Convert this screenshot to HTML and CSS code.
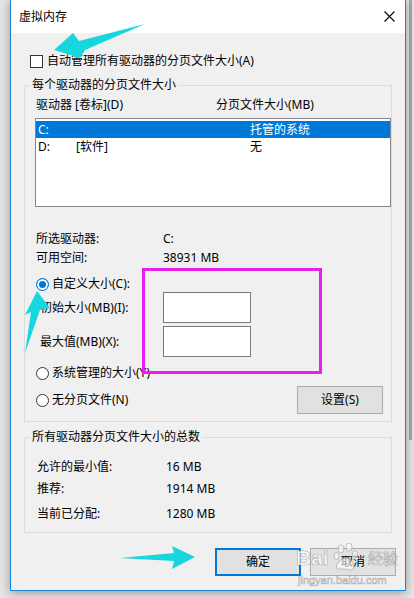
FILE: index.html
```html
<!DOCTYPE html>
<html lang="zh-CN">
<head>
  <meta charset="UTF-8">
  <meta name="viewport" content="width=device-width, initial-scale=1.0">
  <title>虚拟内存</title>
  <link rel="stylesheet" href="styles.css">
</head>
<body>
  <div class="behind-edge"></div>

  <div class="desk">
    <div class="dialog">
      <div class="titlebar">
        <span class="title">虚拟内存</span>
        <svg class="close" width="11" height="11" viewBox="0 0 11 11">
          <path d="M0.5 0.5 L10.5 10.5 M10.5 0.5 L0.5 10.5" stroke="#000" stroke-width="1.1" fill="none"/>
        </svg>
      </div>

      <div class="content">
        <div class="check-row"><span class="checkbox"></span>自动管理所有驱动器的分页文件大小(A)</div>

        <fieldset class="group">
          <legend>每个驱动器的分页文件大小</legend>
          <div class="list-head"><span class="col-drive">驱动器 [卷标](D)</span><span>分页文件大小(MB)</span></div>
          <div class="listbox">
            <div class="list-row selected"><span class="c1">C:</span><span class="c2"></span><span>托管的系统</span></div>
            <div class="list-row"><span class="c1">D:</span><span class="c2">[软件]</span><span>无</span></div>
          </div>

          <div class="info-row first"><span class="info-label">所选驱动器:</span><span>C:</span></div>
          <div class="info-row"><span class="info-label">可用空间:</span><span>38931 MB</span></div>

          <div class="radio-row custom"><span class="radio checked"></span>自定义大小(C):</div>
          <div class="size-row first"><span class="size-label">初始大小(MB)(I):</span><span class="textbox"></span></div>
          <div class="size-row"><span class="size-label">最大值(MB)(X):</span><span class="textbox"></span></div>
          <div class="radio-row system"><span class="radio"></span>系统管理的大小(Y)</div>
          <div class="radio-row nofile"><span class="radio"></span>无分页文件(N)<button class="btn set">设置(S)</button></div>
        </fieldset>

        <fieldset class="group group-total">
          <legend>所有驱动器分页文件大小的总数</legend>
          <div class="total-row first"><span class="total-label">允许的最小值:</span><span>16 MB</span></div>
          <div class="total-row"><span class="total-label">推荐:</span><span>1914 MB</span></div>
          <div class="total-row last"><span class="total-label">当前已分配:</span><span>1280 MB</span></div>
        </fieldset>

        <div class="actions">
          <button class="btn ok">确定</button>
          <button class="btn">取消</button>
        </div>
      </div>
    </div>
  </div>

  <!-- annotations drawn over the screenshot -->
  <div class="mark"></div>

  <svg class="arrows" width="414" height="598" viewBox="0 0 414 598">
    <polygon points="54,50 73,33 79,41 145,24 85,50 80,58" fill="#17d6dd"/>
    <polygon points="37,291 50,308 40,310 25,353 31,312 25,315" fill="#17d6dd"/>
    <polygon points="195,557 172,546 174,553 120,558 174,561 172,569" fill="#17d6dd"/>
  </svg>

  <div class="watermark">
    <div class="wm-line">
      <span class="wm-bai">Bai</span>
      <svg class="wm-paw" width="30" height="30" viewBox="0 0 30 30">
        <g fill="rgba(255,255,255,0.6)" stroke="rgba(140,140,140,0.5)" stroke-width="1">
          <ellipse cx="8" cy="6" rx="3" ry="4"/>
          <ellipse cx="16" cy="4" rx="3" ry="4"/>
          <ellipse cx="3.5" cy="13" rx="2.5" ry="3.5"/>
          <ellipse cx="22" cy="11" rx="2.5" ry="3.5"/>
          <path d="M6 26 C2 26 3 20 8 17 C11 14 15 14 18 18 C22 22 22 27 17 27 C14 26 10 26 6 26 Z"/>
        </g>
      </svg>
      <span class="wm-jy">经验</span>
    </div>
    <span class="wm-url">jingyan.baidu.com</span>
  </div>
</body>
</html>
```

FILE: styles.css
```css
body {
  margin: 0;
  height: 598px;
  overflow: hidden;
  position: relative;
  background: #e6e6e6;
  font-family: "Noto Sans", "Noto Sans CJK SC", sans-serif;
  font-size: 12px;
  line-height: 16px;
  color: #000;
}
.behind-edge {
  position: absolute;
  left: 409px;
  top: 0;
  width: 3px;
  height: 440px;
  background: #a9a9a9;
}
.desk {
  display: flow-root;
  padding-left: 10px;
}
.dialog {
  position: relative;
  width: 394px;
  margin-top: -1px;
  border: 1px solid #1883d7;
  background: #f0f0f0;
  box-shadow: 0 2px 10px rgba(0, 0, 0, 0.35);
}
.titlebar {
  height: 33px;
  background: #fff;
  display: flex;
  align-items: center;
  justify-content: space-between;
  padding: 0 10px 0 8px;
}
.content {
  padding: 0 13px 14px;
}
.check-row {
  display: flex;
  align-items: center;
  gap: 4px;
  height: 16px;
  margin: 20px 0 0 6px;
}
.checkbox {
  width: 13px;
  height: 13px;
  box-sizing: border-box;
  border: 1px solid #333;
  background: #fff;
}
.group {
  margin: 8px 0 0;
  padding: 0 0 7px 10px;
  border: 1px solid #dcdcdc;
  min-width: 0;
}
.group legend {
  padding: 0 2px;
  margin-left: -5px;
  line-height: 16px;
}
.list-head {
  display: flex;
  height: 16px;
  margin-top: 4px;
  padding-left: 1px;
}
.col-drive {
  width: 180px;
}
.listbox {
  height: 89px;
  margin-top: 5px;
  box-sizing: border-box;
  border: 1px solid #828790;
  background: #fff;
  padding-top: 2px;
}
.list-row {
  display: flex;
  height: 17px;
  line-height: 17px;
  padding-left: 2px;
}
.list-row.selected {
  background: #0078d7;
  color: #fff;
}
.c1 {
  width: 38px;
}
.c2 {
  width: 174px;
}
.info-row {
  display: flex;
  height: 19px;
  line-height: 19px;
  padding-left: 1px;
}
.info-row.first {
  margin-top: 22px;
}
.info-label {
  width: 127px;
}
.radio-row {
  display: flex;
  align-items: center;
  gap: 3px;
  height: 20px;
  margin-left: 1px;
}
.radio {
  flex: none;
  width: 13px;
  height: 13px;
  box-sizing: border-box;
  border: 1px solid #333;
  border-radius: 50%;
  background: #fff;
}
.radio.checked {
  border-color: #0078d7;
  background: #0078d7;
  box-shadow: inset 0 0 0 2px #fff;
}
.custom {
  margin-top: 7px;
}
.size-row {
  display: flex;
  align-items: center;
  height: 31px;
  margin-top: 3px;
  padding-left: 5px;
}
.size-row.first {
  margin-top: -2px;
}
.size-label {
  width: 123px;
}
.textbox {
  width: 88px;
  height: 31px;
  box-sizing: border-box;
  border: 1px solid #7a7a7a;
  background: #fff;
}
.system {
  margin-top: 6px;
}
.nofile {
  height: 28px;
  margin-top: 3px;
}
.btn {
  width: 86px;
  height: 28px;
  box-sizing: border-box;
  padding: 0;
  border: 1px solid #adadad;
  background: #e1e1e1;
  font: inherit;
  color: #000;
}
.btn.set {
  margin-left: auto;
  margin-right: 8px;
}
.btn.ok {
  border: 2px solid #0078d7;
}
.group-total {
  margin-top: 7px;
}
.total-row {
  display: flex;
  height: 22px;
  line-height: 22px;
  padding-left: 2px;
}
.total-row.first {
  margin-top: 11px;
}
.total-row.last {
  margin-top: 3px;
}
.total-label {
  width: 129px;
}
.actions {
  display: flex;
  justify-content: flex-end;
  gap: 9px;
  margin: 15px -4px 0 0;
}
.mark {
  position: absolute;
  left: 142px;
  top: 268px;
  width: 180px;
  height: 106px;
  box-sizing: border-box;
  border: 3px solid #ea1eea;
}
.arrows {
  position: absolute;
  left: 0;
  top: 0;
  pointer-events: none;
}
.watermark {
  position: absolute;
  left: 296px;
  top: 542px;
  width: 118px;
  display: flex;
  flex-direction: column;
  color: rgba(255, 255, 255, 0.8);
  -webkit-text-stroke: 0.6px rgba(120, 120, 120, 0.6);
  pointer-events: none;
}
.wm-line {
  display: flex;
  align-items: center;
  height: 32px;
}
.wm-bai {
  flex: none;
  font-family: "Liberation Sans", sans-serif;
  font-size: 21px;
  font-weight: bold;
  line-height: 26px;
}
.wm-paw {
  flex: none;
  margin-left: 4px;
}
.wm-jy {
  flex: none;
  margin-left: 5px;
  font-family: "Noto Sans CJK SC", sans-serif;
  font-size: 15px;
  line-height: 20px;
}
.wm-url {
  font-family: "Liberation Sans", sans-serif;
  font-size: 11px;
  line-height: 12px;
  padding-left: 2px;
}
```
